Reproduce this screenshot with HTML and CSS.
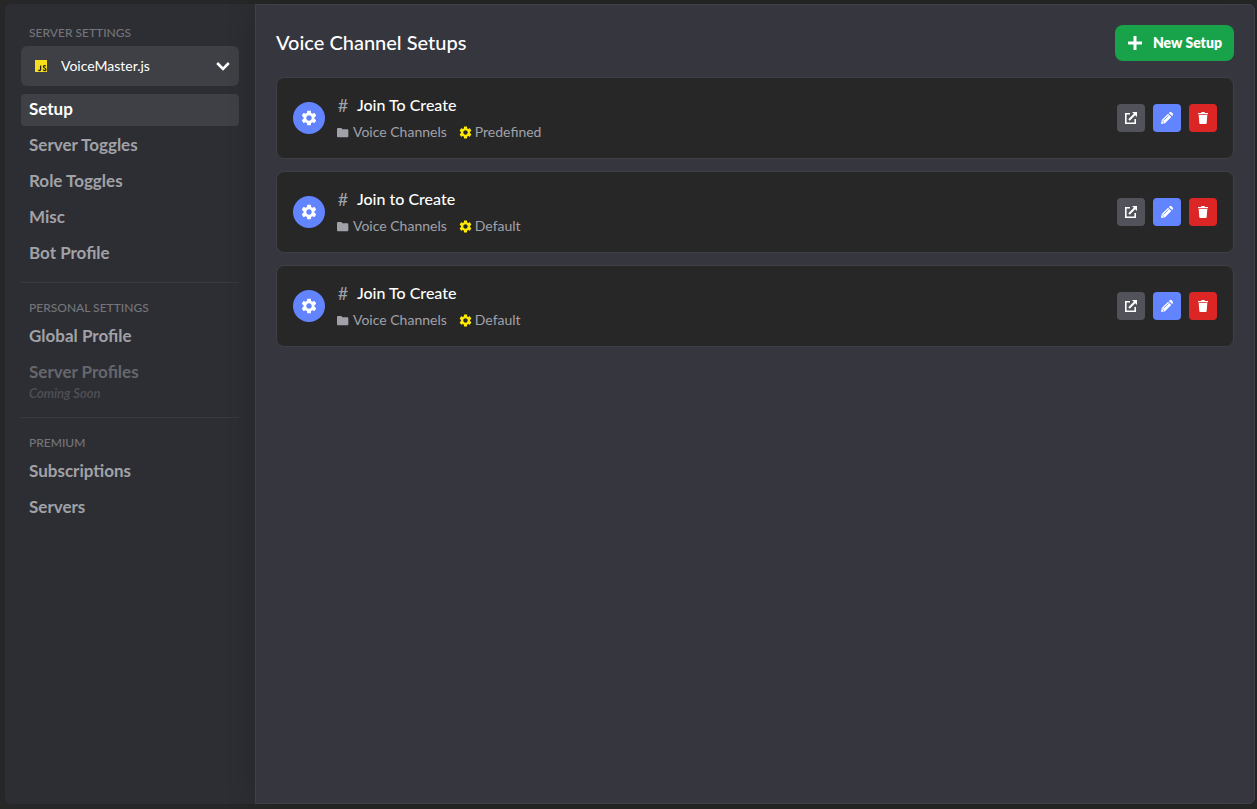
FILE: index.html
```html
<!DOCTYPE html>
<html lang="en">

<head>
    <meta charset="UTF-8" />
    <meta name="viewport" content="width=device-width, initial-scale=1" />
    <title>Voice Channel Setups</title>
    <link rel="stylesheet" href="styles.css">
</head>

<body>
    <!-- Shared icons -->
    <svg class="sprite" aria-hidden="true">
        <symbol id="icon-gear" viewBox="1.5 1.5 21 21">
            <path d="M19.14 12.94c.04-.3.06-.61.06-.94 0-.32-.02-.64-.07-.94l2.03-1.58c.18-.14.23-.41.12-.61l-1.92-3.32c-.12-.22-.37-.29-.59-.22l-2.39.96c-.5-.38-1.03-.7-1.62-.94l-.36-2.54c-.04-.24-.24-.41-.48-.41h-3.84c-.24 0-.43.17-.47.41l-.36 2.54c-.59.24-1.13.57-1.62.94l-2.39-.96c-.22-.08-.47 0-.59.22L2.74 8.87c-.12.21-.08.47.12.61l2.03 1.58c-.05.3-.09.63-.09.94s.02.64.07.94l-2.03 1.58c-.18.14-.23.41-.12.61l1.92 3.32c.12.22.37.29.59.22l2.39-.96c.5.38 1.03.7 1.62.94l.36 2.54c.05.24.24.41.48.41h3.84c.24 0 .44-.17.47-.41l.36-2.54c.59-.24 1.13-.56 1.62-.94l2.39.96c.22.08.47 0 .59-.22l1.92-3.32c.12-.22.07-.47-.12-.61l-2.01-1.58zM12 15.6c-1.98 0-3.6-1.62-3.6-3.6s1.62-3.6 3.6-3.6 3.6 1.62 3.6 3.6-1.62 3.6-3.6 3.6z" />
        </symbol>
        <symbol id="icon-folder" viewBox="0 0 14 14">
            <path d="M0 3.2a1 1 0 0 1 1-1h3.6L6 3.6h5.2a1 1 0 0 1 1 1V11a1 1 0 0 1-1 1H1a1 1 0 0 1-1-1z" />
        </symbol>
        <symbol id="icon-open" viewBox="0 0 14 14">
            <path d="M6 2.8H1.8v9.4h9.4V8" fill="none" stroke="currentColor" stroke-width="1.6" />
            <path d="M5 9l6-6" fill="none" stroke="currentColor" stroke-width="2" />
            <path d="M8 1h5v5z" />
        </symbol>
        <symbol id="icon-pencil" viewBox="0 0 14 14">
            <path d="M1 13l.8-4L8.1 2.7l3.2 3.2L5 12.2zM8.9 1.9l.7-.6a1.4 1.4 0 0 1 1.9 0l1.2 1.2a1.4 1.4 0 0 1 0 1.9l-.6.7z" />
            <path d="M3.6 9.4l5-5M2.4 10l1.6 1.6" fill="none" stroke="#6284ff" stroke-width=".8" />
        </symbol>
        <symbol id="icon-trash" viewBox="0 0 14 14">
            <path d="M2 2h3l.5-1h3L9 2h3v1.2H2zM2.7 4h8.6l-.6 8a1 1 0 0 1-1 1H4.3a1 1 0 0 1-1-1z" />
        </symbol>
        <symbol id="icon-plus" viewBox="0 0 16 16">
            <path d="M8 1v14M1 8h14" fill="none" stroke="currentColor" stroke-width="3" />
        </symbol>
    </svg>

    <div class="panel">
        <aside class="sidebar">
            <section class="group">
                <label class="group-title" for="server">Server Settings</label>
                <div class="server-select">
                    <svg class="server-logo" viewBox="0 0 12 12" aria-hidden="true">
                        <rect width="12" height="12" fill="#f7df1e" />
                        <path d="M5.6 5.4v4.1q0 1.1-.9 1.1t-1.2-.8M10.7 6.3q-.3-.7-1.2-.7-1.1 0-1.1 1.1 0 .8 1.2 1.3 1.3.5 1.3 1.4 0 1.2-1.3 1.2-1.1 0-1.5-1" fill="none" stroke="#222" stroke-width="1.3" />
                    </svg>
                    <select id="server">
                        <option>VoiceMaster.js</option>
                    </select>
                    <svg class="server-arrow" viewBox="0 0 14 10" aria-hidden="true">
                        <path d="M1.2 2L7 7.8 12.8 2" fill="none" stroke="#fff" stroke-width="2.6" />
                    </svg>
                </div>
                <nav class="nav">
                    <a class="nav-item active" href="#setup">Setup</a>
                    <a class="nav-item" href="#server-toggles">Server Toggles</a>
                    <a class="nav-item" href="#role-toggles">Role Toggles</a>
                    <a class="nav-item" href="#misc">Misc</a>
                    <a class="nav-item" href="#bot-profile">Bot Profile</a>
                </nav>
            </section>
            <section class="group">
                <h2 class="group-title">Personal Settings</h2>
                <nav class="nav">
                    <a class="nav-item" href="#global-profile">Global Profile</a>
                    <a class="nav-item disabled" aria-disabled="true">Server Profiles</a>
                </nav>
                <p class="soon">Coming Soon</p>
            </section>
            <section class="group">
                <h2 class="group-title">Premium</h2>
                <nav class="nav">
                    <a class="nav-item" href="#subscriptions">Subscriptions</a>
                    <a class="nav-item" href="#servers">Servers</a>
                </nav>
            </section>
        </aside>

        <main class="content">
            <header class="content-header">
                <h1>Voice Channel Setups</h1>
                <button class="new-setup" type="button"><svg><use href="#icon-plus" /></svg>New Setup</button>
            </header>

            <div class="setups">
                <article class="setup">
                    <span class="setup-icon"><svg><use href="#icon-gear" /></svg></span>
                    <div class="setup-info">
                        <h3 class="setup-name"><span class="hash">#</span>Join To Create</h3>
                        <div class="setup-meta">
                            <span class="meta"><svg><use href="#icon-folder" /></svg>Voice Channels</span>
                            <span class="meta"><svg class="yellow"><use href="#icon-gear" /></svg>Predefined</span>
                        </div>
                    </div>
                    <div class="actions">
                        <button class="action open" type="button" aria-label="Open"><svg><use href="#icon-open" /></svg></button>
                        <button class="action edit" type="button" aria-label="Edit"><svg><use href="#icon-pencil" /></svg></button>
                        <button class="action delete" type="button" aria-label="Delete"><svg><use href="#icon-trash" /></svg></button>
                    </div>
                </article>

                <article class="setup">
                    <span class="setup-icon"><svg><use href="#icon-gear" /></svg></span>
                    <div class="setup-info">
                        <h3 class="setup-name"><span class="hash">#</span>Join to Create</h3>
                        <div class="setup-meta">
                            <span class="meta"><svg><use href="#icon-folder" /></svg>Voice Channels</span>
                            <span class="meta"><svg class="yellow"><use href="#icon-gear" /></svg>Default</span>
                        </div>
                    </div>
                    <div class="actions">
                        <button class="action open" type="button" aria-label="Open"><svg><use href="#icon-open" /></svg></button>
                        <button class="action edit" type="button" aria-label="Edit"><svg><use href="#icon-pencil" /></svg></button>
                        <button class="action delete" type="button" aria-label="Delete"><svg><use href="#icon-trash" /></svg></button>
                    </div>
                </article>

                <article class="setup">
                    <span class="setup-icon"><svg><use href="#icon-gear" /></svg></span>
                    <div class="setup-info">
                        <h3 class="setup-name"><span class="hash">#</span>Join To Create</h3>
                        <div class="setup-meta">
                            <span class="meta"><svg><use href="#icon-folder" /></svg>Voice Channels</span>
                            <span class="meta"><svg class="yellow"><use href="#icon-gear" /></svg>Default</span>
                        </div>
                    </div>
                    <div class="actions">
                        <button class="action open" type="button" aria-label="Open"><svg><use href="#icon-open" /></svg></button>
                        <button class="action edit" type="button" aria-label="Edit"><svg><use href="#icon-pencil" /></svg></button>
                        <button class="action delete" type="button" aria-label="Delete"><svg><use href="#icon-trash" /></svg></button>
                    </div>
                </article>
            </div>
        </main>
    </div>
</body>

</html>
```
FILE: styles.css
```css
* {
    box-sizing: border-box;
}

body {
    display: flex;
    min-height: 100vh;
    margin: 0;
    padding: 4px 2px 5px 5px;
    background: #272727;
    color: #fff;
    font-family: "Trebuchet MS", Lato, sans-serif;
    font-size: 16px;
    line-height: 24px;
}

h1, h2, h3, p {
    margin: 0;
}

svg {
    display: block;
    flex: none;
    fill: currentColor;
}

.sprite {
    display: none;
}

.panel {
    display: flex;
    flex: 1;
}

/* Sidebar */
.sidebar {
    flex: none;
    width: 250px;
    padding: 20px 16px;
    background: #2d2e33;
    border-radius: 6px 0 0 6px;
}

.group + .group {
    margin-top: 12px;
    padding-top: 16px;
    border-top: 1px solid #393940;
}

.soon + .group,
.group:last-child {
    margin-top: 16px;
}

.group-title {
    display: block;
    padding: 1px 8px 0;
    margin-bottom: 5px;
    color: #74757a;
    font-size: 12px;
    font-weight: 500;
    line-height: 16px;
    text-transform: uppercase;
}

.server-select {
    display: grid;
    align-items: center;
    margin-bottom: 8px;
}

.server-select > * {
    grid-area: 1 / 1;
}

.server-select select {
    appearance: none;
    width: 100%;
    height: 40px;
    padding: 0 36px 0 40px;
    border: 0;
    border-radius: 6px;
    background: #3f4045;
    color: #fff;
    font: inherit;
    font-size: 14px;
}

.server-logo {
    z-index: 1;
    width: 12px;
    height: 12px;
    margin-left: 14px;
    pointer-events: none;
}

.server-arrow {
    z-index: 1;
    justify-self: end;
    width: 14px;
    height: 10px;
    margin-right: 9px;
    pointer-events: none;
}

.nav {
    display: flex;
    flex-direction: column;
    gap: 4px;
}

.nav-item {
    padding: 3px 8px 5px;
    border-radius: 4px;
    color: #a1a2a8;
    font-size: 17px;
    font-weight: 700;
    text-decoration: none;
}

.nav-item.active {
    background: #3f4045;
    color: #fff;
}

.nav-item.disabled {
    color: #66676d;
}

.soon {
    margin-top: -4px;
    padding: 0 8px;
    color: #4f5056;
    font-size: 13px;
    font-style: italic;
    font-weight: 600;
    line-height: 16px;
}

/* Content */
.content {
    flex: 1;
    min-width: 0;
    padding: 20px;
    background: #36363f;
    border: 1px solid #404047;
    border-radius: 0 6px 6px 0;
    box-shadow: 0 0 30px rgba(0, 0, 0, 0.2);
}

.content-header {
    display: flex;
    align-items: center;
    justify-content: space-between;
    margin-bottom: 16px;
}

.content-header h1 {
    padding-bottom: 2px;
    font-size: 20px;
    font-weight: 500;
}

.new-setup {
    display: flex;
    align-items: center;
    gap: 10px;
    height: 36px;
    padding: 0 12px;
    border: 0;
    border-radius: 8px;
    background: #18a34a;
    color: #fff;
    font: inherit;
    font-size: 14px;
    font-weight: 800;
}

.new-setup svg {
    width: 16px;
    height: 16px;
}

.setups {
    display: flex;
    flex-direction: column;
    gap: 12px;
}

.setup {
    display: flex;
    align-items: center;
    gap: 12px;
    padding: 16px;
    border: 1px solid #3f3f46;
    border-radius: 8px;
    background: #272728;
}

.setup-icon {
    display: flex;
    align-items: center;
    justify-content: center;
    width: 32px;
    height: 32px;
    border-radius: 50%;
    background: #6284ff;
}

.setup-icon svg {
    width: 16px;
    height: 16px;
}

.setup-info {
    flex: 1;
}

.setup-name {
    display: flex;
    gap: 8px;
    margin-bottom: 6px;
    font-size: 16px;
    font-weight: 500;
    line-height: 22px;
}

.hash {
    width: 12px;
    color: #a1a1aa;
    font-size: 18px;
    font-weight: 400;
    text-align: center;
}

.setup-meta {
    display: flex;
    gap: 12px;
    color: #a1a1aa;
    font-size: 14px;
    line-height: 20px;
}

.meta {
    display: flex;
    align-items: center;
    gap: 3px;
}

.meta svg {
    width: 13px;
    height: 13px;
}

.yellow {
    color: #ffea00;
}

.actions {
    display: flex;
    gap: 8px;
}

.action {
    display: flex;
    align-items: center;
    justify-content: center;
    width: 28px;
    height: 28px;
    padding: 0;
    border: 0;
    border-radius: 4px;
    color: #fff;
}

.action svg {
    width: 14px;
    height: 14px;
}

.open {
    background: #52525b;
}

.edit {
    background: #6284ff;
}

.delete {
    background: #dc2626;
}
```
